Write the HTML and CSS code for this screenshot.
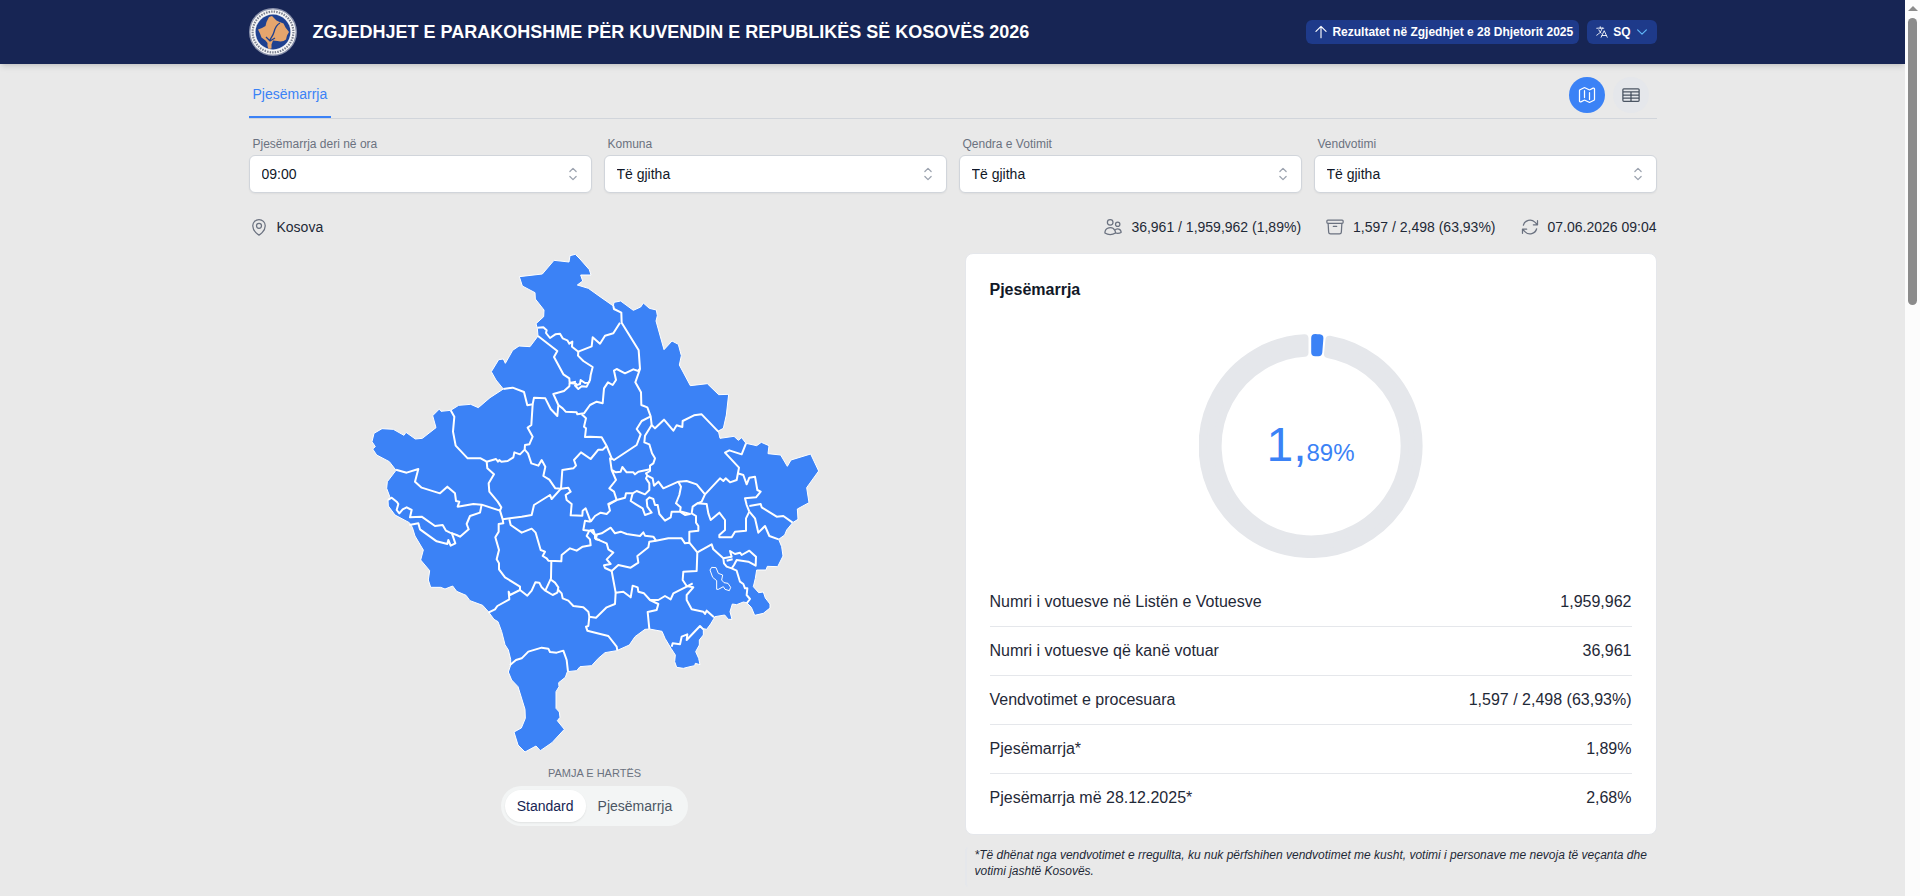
FILE: index.html
```html
<!DOCTYPE html>
<html lang="sq">
<head>
<meta charset="utf-8">
<meta name="viewport" content="width=device-width, initial-scale=1">
<title>Zgjedhjet e parakohshme për Kuvendin e Republikës së Kosovës 2026</title>
<link rel="stylesheet" href="styles.css">
</head>
<body>
<div class="page">
  <header class="topbar">
    <div class="container topbar-inner">
      <svg class="logo" viewBox="0 0 48 48" aria-hidden="true">
        <circle cx="24" cy="24" r="24" fill="#8d94ad"/>
        <circle cx="24" cy="24" r="22.6" fill="#f7f7f8"/>
        <circle cx="24" cy="24" r="20.4" fill="none" stroke="#7c8190" stroke-width="2.2" stroke-dasharray="1.5 1.1"/>
        <circle cx="24" cy="24" r="18" fill="#dfe3ee"/>
        <circle cx="24" cy="24" r="17.4" fill="#1e4090"/>
        <path fill="#e5a56d" d="M20 9l3-1 1.500 1.500 3 3 3 1.500 4 1.500 2 4 3.500 4.500-2 3.500-1 4-2.500 1.500-3 .5-3-.5-4.500-.5-1.500 4 0 4-3 .5-1-3 0-3-2-2.500-4-3-1.500-4-2-4 4-1.500 3.500-2 1-4z"/>
        <path fill="none" stroke="#1e4090" stroke-width="1.300" d="M31 15c-4 2-5 5-6 9s-3 5-4.500 9M17 29l4 4 5-3"/>
      </svg>
      <h1 class="title">ZGJEDHJET E PARAKOHSHME PËR KUVENDIN E REPUBLIKËS SË KOSOVËS 2026</h1>
      <div class="topbar-actions">
        <a class="chip" href="#">
          <svg class="icon chip-icon" viewBox="0 0 24 24" aria-hidden="true"><path d="M12 19.500v-15m0 0-6.750 6.750M12 4.500l6.750 6.750"/></svg>
          Rezultatet në Zgjedhjet e 28 Dhjetorit 2025
        </a>
        <button class="chip chip-lang" type="button">
          <svg class="icon lang-icon" viewBox="0 0 24 24" aria-hidden="true"><path d="m10.500 21 5.250-11.250L21 21m-9-3h7.500M3 5.621a48.474 48.474 0 0 1 6-.371m0 0c1.120 0 2.233.038 3.334.114M9 5.250V3m3.334 2.364C11.176 10.658 7.690 15.080 3 17.502m9.334-12.138c.896.061 1.785.147 2.666.257m-4.589 8.495a18.023 18.023 0 0 1-3.827-5.802"/></svg>
          SQ
          <svg class="icon lang-caret" viewBox="0 0 24 24" aria-hidden="true"><path d="m19.500 8.250-7.500 7.500-7.500-7.500"/></svg>
        </button>
      </div>
    </div>
  </header>

  <main class="container">
    <div class="tabs">
      <a class="tab" href="#">Pjesëmarrja</a>
      <div class="view-switch">
        <button class="round round-active" type="button" aria-label="Harta">
          <svg class="icon" viewBox="0 0 24 24" aria-hidden="true"><path d="M9 6.750V15m6-6v8.250m.503 3.498 4.875-2.437c.381-.19.622-.58.622-1.006V4.820c0-.836-.88-1.380-1.628-1.006l-3.869 1.934c-.317.159-.69.159-1.006 0L9.503 3.252a1.125 1.125 0 0 0-1.006 0L3.622 5.689C3.240 5.880 3 6.270 3 6.695V19.180c0 .836.88 1.380 1.628 1.006l3.869-1.934c.317-.159.69-.159 1.006 0l4.994 2.497c.317.158.69.158 1.006 0Z"/></svg>
        </button>
        <button class="round" type="button" aria-label="Tabela">
          <svg class="icon" viewBox="0 0 24 24" aria-hidden="true"><path d="M3.375 19.500h17.250m-17.250 0a1.125 1.125 0 0 1-1.125-1.125M3.375 19.500h7.500c.621 0 1.125-.504 1.125-1.125m-9.750 0V5.625m0 12.750v-1.500c0-.621.504-1.125 1.125-1.125m18.375 2.625V5.625m0 12.750c0 .621-.504 1.125-1.125 1.125m1.125-1.125v-1.500c0-.621-.504-1.125-1.125-1.125m0 3.750h-7.500A1.125 1.125 0 0 1 12 18.375m9.750-12.750c0-.621-.504-1.125-1.125-1.125H3.375c-.621 0-1.125.504-1.125 1.125m19.500 0v1.500c0 .621-.504 1.125-1.125 1.125M2.250 5.625v1.500c0 .621.504 1.125 1.125 1.125m0 0h17.250m-17.250 0h7.500c.621 0 1.125.504 1.125 1.125M3.375 8.250c-.621 0-1.125.504-1.125 1.125v1.500c0 .621.504 1.125 1.125 1.125m17.250-3.750h-7.500c-.621 0-1.125.504-1.125 1.125m8.625-1.125c.621 0 1.125.504 1.125 1.125v1.500c0 .621-.504 1.125-1.125 1.125m-17.250 0h7.500m-7.500 0c-.621 0-1.125.504-1.125 1.125v1.500c0 .621.504 1.125 1.125 1.125M12 10.875v-1.500m0 1.500c0 .621-.504 1.125-1.125 1.125M12 10.875c0 .621.504 1.125 1.125 1.125m-2.250 0c.621 0 1.125.504 1.125 1.125M13.125 12h7.500m-7.500 0c-.621 0-1.125.504-1.125 1.125M20.625 12c.621 0 1.125.504 1.125 1.125v1.500c0 .621-.504 1.125-1.125 1.125m-17.250 0h7.500M12 14.625v-1.500m0 1.500c0 .621-.504 1.125-1.125 1.125M12 14.625c0 .621.504 1.125 1.125 1.125m-2.250 0c.621 0 1.125.504 1.125 1.125m0 1.500v-1.500m0 0c0-.621.504-1.125 1.125-1.125m0 0h7.500"/></svg>
        </button>
      </div>
    </div>

    <form class="filters">
      <div class="field">
        <label for="ora">Pjesëmarrja deri në ora</label>
        <div class="select-wrap">
          <select id="ora"><option>09:00</option></select>
          <svg class="icon select-icon" viewBox="0 0 24 24" aria-hidden="true"><path d="M8.250 15 12 18.750 15.750 15m-7.500-6L12 5.250 15.750 9"/></svg>
        </div>
      </div>
      <div class="field">
        <label for="komuna">Komuna</label>
        <div class="select-wrap">
          <select id="komuna"><option>Të gjitha</option></select>
          <svg class="icon select-icon" viewBox="0 0 24 24" aria-hidden="true"><path d="M8.250 15 12 18.750 15.750 15m-7.500-6L12 5.250 15.750 9"/></svg>
        </div>
      </div>
      <div class="field">
        <label for="qendra">Qendra e Votimit</label>
        <div class="select-wrap">
          <select id="qendra"><option>Të gjitha</option></select>
          <svg class="icon select-icon" viewBox="0 0 24 24" aria-hidden="true"><path d="M8.250 15 12 18.750 15.750 15m-7.500-6L12 5.250 15.750 9"/></svg>
        </div>
      </div>
      <div class="field">
        <label for="vendvotimi">Vendvotimi</label>
        <div class="select-wrap">
          <select id="vendvotimi"><option>Të gjitha</option></select>
          <svg class="icon select-icon" viewBox="0 0 24 24" aria-hidden="true"><path d="M8.250 15 12 18.750 15.750 15m-7.500-6L12 5.250 15.750 9"/></svg>
        </div>
      </div>
    </form>

    <div class="summary">
      <div class="stat stat-place">
        <svg class="icon" viewBox="0 0 24 24" aria-hidden="true"><path d="M15 10.500a3 3 0 1 1-6 0 3 3 0 0 1 6 0Z"/><path d="M19.500 10.500c0 7.142-7.500 11.250-7.500 11.250S4.500 17.642 4.500 10.500a7.500 7.500 0 1 1 15 0Z"/></svg>
        <span>Kosova</span>
      </div>
      <div class="stat">
        <svg class="icon" viewBox="0 0 24 24" aria-hidden="true"><path d="M15 19.128a9.380 9.380 0 0 0 2.625.372 9.337 9.337 0 0 0 4.121-.952 4.125 4.125 0 0 0-7.533-2.493M15 19.128v-.003c0-1.113-.285-2.160-.786-3.070M15 19.128v.106A12.318 12.318 0 0 1 8.624 21c-2.331 0-4.512-.645-6.374-1.766l-.001-.109a6.375 6.375 0 0 1 11.964-3.070M12 6.375a3.375 3.375 0 1 1-6.750 0 3.375 3.375 0 0 1 6.750 0Zm8.250 2.250a2.625 2.625 0 1 1-5.250 0 2.625 2.625 0 0 1 5.250 0Z"/></svg>
        <span>36,961 / 1,959,962 (1,89%)</span>
      </div>
      <div class="stat">
        <svg class="icon" viewBox="0 0 24 24" aria-hidden="true"><path d="m20.250 7.500-.625 10.632a2.250 2.250 0 0 1-2.247 2.118H6.622a2.250 2.250 0 0 1-2.247-2.118L3.750 7.500M10 11.250h4M3.375 7.500h17.250c.621 0 1.125-.504 1.125-1.125v-1.500c0-.621-.504-1.125-1.125-1.125H3.375c-.621 0-1.125.504-1.125 1.125v1.500c0 .621.504 1.125 1.125 1.125Z"/></svg>
        <span>1,597 / 2,498 (63,93%)</span>
      </div>
      <div class="stat">
        <svg class="icon" viewBox="0 0 24 24" aria-hidden="true"><path d="M16.023 9.348h4.992v-.001M2.985 19.644v-4.992m0 0h4.992m-4.993 0 3.181 3.183a8.250 8.250 0 0 0 13.803-3.700M4.031 9.865a8.250 8.250 0 0 1 13.803-3.700l3.181 3.182m0-4.991v4.990"/></svg>
        <span>07.06.2026 09:04</span>
      </div>
    </div>

    <div class="columns">
      <section class="map-panel">
        <svg class="map" viewBox="30 24 1350 1512" role="img" aria-label="Harta e Kosovës">
          <path class="land" d="M630,32 646,28 660,42 688,74 693,90 662,90 668,108 652,120 685,130 720,155 760,183 762,172 782,168 820,196 842,186 850,174 868,190 889,195 892,212 888,228 912,314 936,288 955,298 964,332 958,360 991,422 1042,416 1076,449 1106,448 1099,510 1090,550 1075,558 1080,580 1122,574 1135,586 1145,578 1158,595 1190,602 1204,592 1227,602 1224,626 1262,630 1282,664 1293,645 1352,627 1376,678 1340,728 1347,773 1312,792 1314,823 1298,833 1280,855 1274,870 1256,883 1265,905 1269,933 1253,965 1222,964 1218,975 1190,975 1186,1000 1180,1025 1196,1043 1210,1041 1216,1059 1230,1077 1230,1089 1210,1105 1184,1111 1174,1087 1160,1073 1150,1071 1130,1079 1117,1077 1110,1100 1116,1123 1105,1123 1094,1110 1065,1115 1052,1137 1040,1153 1030,1151 1030,1170 1018,1185 1018,1200 1007,1220 1016,1240 1020,1259 1006,1255 1004,1262 990,1265 970,1270 950,1267 944,1250 946,1230 933,1210 915,1180 906,1159 868,1152 855,1153 825,1175 808,1200 770,1217 735,1223 715,1240 695,1262 660,1265 650,1277 622,1280 616,1297 596,1313 597,1325 588,1340 588,1390 598,1401 600,1417 592,1427 613,1453 576,1493 541,1517 528,1503 495,1521 474,1500 462,1461 484,1449 496,1420 495,1393 474,1325 455,1305 445,1281 452,1260 452,1243 445,1215 435,1199 425,1160 414,1130 402,1123 385,1100 368,1081 330,1067 318,1051 290,1039 278,1023 255,1032 242,1027 212,1027 205,1005 209,977 182,945 190,915 165,873 157,847 148,833 105,810 85,783 84,765 90,757 80,730 82,710 108,676 88,650 50,630 38,612 46,605 36,590 42,565 66,551 100,553 132,571 138,562 166,582 187,580 228,548 218,512 238,492 243,499 272,496 296,481 332,478 355,488 390,458 430,432 408,405 394,380 416,344 430,342 436,355 458,316 477,303 510,305 534,273 532,250 528,236 551,215 552,195 526,162 525,143 487,123 478,95 547,87 582,46 627,51Z"/>
          <g class="border">
            <path d="M532,248 550,247 560,256 558,264 570,279 586,268 600,266 608,280 622,286 628,296 637,290 636,305 655,320 695,304 698,277 720,296 735,272 760,265 780,233"/>
            <path d="M534,273 592,318 582,336 610,388 628,400 629,414 648,410M655,320 654,332 670,348 698,366 692,390 690,405 680,425 665,424 655,432 645,422 660,417 662,405 675,414 690,410M629,414 648,416 650,428"/>
            <path d="M629,414 628,424 612,438 580,447 595,480 592,513 572,492 556,460 522,458 518,478 502,481 492,441 458,428 430,432M595,480 608,490 617,500 650,502 652,508 672,505 690,480 710,470 728,475 732,430 744,412 758,420 768,405 762,377 770,372 795,385 820,373 835,378 838,372"/>
            <path d="M518,478 514,540 503,548 518,575 508,598 495,600 494,614 480,628 463,622 460,637 443,648 424,650 418,645 414,650 408,642 380,650 362,640 323,640 287,602 279,560 283,515 272,496"/>
            <path d="M665,508 678,520 672,545 678,550 675,576 690,575 725,577 740,603 755,640 762,645 830,600 842,568 830,552 845,528 872,514"/>
            <path d="M494,614 504,625 514,655 535,662 545,645 556,665 550,693 568,704 586,730 603,731 607,675 640,670 648,662 642,645 663,622 692,642 715,614 728,614 740,603"/>
            <path d="M108,674 140,683 175,672 165,710 185,728 240,745 262,725 285,745 288,768 298,770 293,785 340,777 365,779 420,797 424,787 413,770 388,740 386,715 402,688 382,670 380,650"/>
            <path d="M603,731 575,762 570,750 522,780 515,810 485,815 428,823M603,731 625,728 632,740 617,750 620,765 635,777 632,811 667,812 668,797 677,790 692,830"/>
            <path d="M84,765 95,758 110,770 115,777 110,795 118,805 128,793 140,787 155,795 150,817 185,815 225,843 248,840 258,857 270,863 290,870 300,875 326,853 320,837 330,813 360,803 365,779"/>
            <path d="M148,840 175,835 180,853 230,889 262,897 265,885 272,902 286,895 275,863"/>
          </g>
          <g class="border" transform="translate(690 0)">
            <path d="M70,183 72,192 94,203 95,233 146,316 150,372 136,412 153,442 154,480 172,487 182,514 185,540 195,550 222,524 250,557 260,541 277,546 278,528 312,511 335,508 385,560"/>
            <path d="M185,540 165,572 163,592 178,598 186,625 195,640 190,655 180,662 180,678 168,685 172,692 168,700 178,715 178,735 165,748 140,738 128,745 108,745 105,758 80,765 55,780"/>
            <path d="M66,643 60,640 65,675 78,682 92,680 97,666 110,682 130,682 135,688 145,680 180,673M65,675 78,705 58,730 72,740 80,765M128,745 122,768 138,778 158,790 165,810 185,803 172,785 170,765 178,757 190,762 195,780 203,780 208,807 225,827 242,817 245,800 275,800 300,807 285,810 270,800 272,787 258,775 268,750 273,725 265,710"/>
            <path d="M172,692 188,700 192,722 205,710 220,730 265,710 290,708 320,718 345,748 390,700 400,708 407,700 420,712 440,705 447,668 405,623 418,616 455,628 468,595M345,748 335,770 322,775"/>
            <path d="M443,685 460,690 470,718 478,698 495,695 502,735 512,740 498,757 465,760 470,780 478,800"/>
          </g>
          <g class="border" transform="translate(0 765)">
            <path d="M420,32 428,58 430,70 416,72 416,95 406,112 417,150 410,178 417,190 417,208 435,232 480,260 480,270 450,285 446,275 448,298 412,318 405,328 385,338"/>
            <path d="M448,58 452,75 485,98 515,86 527,98 542,150 555,155 548,168 560,175 565,182 604,184 605,165 630,145 650,152 668,140 692,136 690,118 680,108 688,92 700,90 705,105"/>
            <path d="M574,182 573,235 556,272 545,262 538,248 526,247 515,272 502,287 480,270M570,237 585,248 595,262 592,278 578,285 556,272M595,270 605,280 608,295 625,302 640,318 670,322 685,335 688,350 708,353 740,322 765,312 767,278"/>
            <path d="M688,350 685,378 678,380 682,392 745,408 770,440 772,452M692,65 675,62 670,90 688,92M692,65 705,48 722,38 740,42 750,32 745,12 770,0"/>
            <path d="M720,120 708,118 710,105 705,105"/>
            <path d="M450,495 468,480 485,475 505,455 545,443 565,446 570,456 590,458 610,452 620,480 624,515"/>
          </g>
          <g class="border" transform="translate(690 765)">
            <path d="M0,90 15,105 35,100 62,83 75,100 92,95 110,102 150,108 160,97 165,107 190,110 198,122 235,115 275,115 285,130 298,128 322,157"/>
            <path d="M15,105 15,115 50,130 55,148 70,158 50,178 62,192 42,196 45,204 65,213 85,195 122,203 145,188 142,168 175,142 178,125 198,122"/>
            <path d="M65,213 70,240 77,278 100,275 122,292 128,257 143,262 145,275 162,280 180,300 205,300 225,288 242,298 250,280 290,260 308,250M180,300 205,312 200,330 173,336 178,387"/>
            <path d="M322,157 320,213 280,215 278,240 290,258 310,262 290,285 290,300 305,328 340,335 345,342 350,332 372,352"/>
            <path d="M322,157 365,133 370,148 400,175 402,190 410,200 425,205 440,212 450,245 460,252 465,265 472,265 470,285 480,297 470,310M400,175 425,170 420,153 435,162 450,158 455,165 478,152 498,170 497,197 475,185 440,180 432,195 425,205M410,182 428,178"/>
            <path d="M298,128 298,95 325,92 325,78 318,68 318,48 305,40 308,20 322,10 350,12 355,40 362,60 388,38 405,60 405,90 388,105 388,112 425,112 435,95 468,92 468,55 478,35"/>
            <path d="M478,18 512,12 515,22 560,50 580,48 608,68M478,35 495,55 505,98 525,78 538,108 566,118"/>
            <path d="M245,440 248,430 270,433 275,410 292,403 290,420 330,378 340,388"/>
            <path class="enclave" d="M365,202 378,203 385,220 398,225 395,240 402,248 414,250 422,262 418,272 405,268 400,260 385,268 380,268 380,242 368,232 360,210Z"/>
          </g>
        </svg>
        <p class="map-label">PAMJA E HARTËS</p>
        <div class="segmented">
          <button class="segment segment-active" type="button">Standard</button>
          <button class="segment" type="button">Pjesëmarrja</button>
        </div>
      </section>

      <section class="results">
        <div class="card">
          <h2 class="card-title">Pjesëmarrja</h2>
          <div class="donut">
            <svg class="donut-ring" viewBox="0 0 224 224" aria-hidden="true">
              <path class="arc arc-rest" d="M130.500 5.700A108 108 0 1 1 105.500 4.200L105.500 18.700A93.500 93.500 0 1 0 129 20Z"/>
              <path class="arc arc-vote" d="M116.200 4A108 108 0 0 1 120.400 4.300L119.300 18.300A93.500 93.500 0 0 0 116.200 18.200Z"/>
            </svg>
            <p class="donut-value"><span class="donut-int">1,</span><span class="donut-dec">89%</span></p>
          </div>
          <dl class="rows">
            <div class="row"><dt>Numri i votuesve në Listën e Votuesve</dt><dd>1,959,962</dd></div>
            <div class="row"><dt>Numri i votuesve që kanë votuar</dt><dd>36,961</dd></div>
            <div class="row"><dt>Vendvotimet e procesuara</dt><dd>1,597 / 2,498 (63,93%)</dd></div>
            <div class="row"><dt>Pjesëmarrja*</dt><dd>1,89%</dd></div>
            <div class="row"><dt>Pjesëmarrja më 28.12.2025*</dt><dd>2,68%</dd></div>
          </dl>
        </div>
        <p class="note">*Të dhënat nga vendvotimet e rregullta, ku nuk përfshihen vendvotimet me kusht, votimi i personave me nevoja të veçanta dhe votimi jashtë Kosovës.</p>
      </section>
    </div>
  </main>
</div>
<div class="scrollbar" aria-hidden="true">
  <span class="scroll-arrow"></span>
  <span class="scroll-thumb"></span>
</div>
</body>
</html>
```
FILE: styles.css
```css
* {
  box-sizing: border-box;
}

body {
  margin: 0;
  min-height: 100vh;
  display: grid;
  grid-template-columns: minmax(0, 1fr) 15px;
  background: #e9e9e9;
  color: #1f2937;
  font-family: "Liberation Sans", Arial, sans-serif;
  font-size: 14px;
  line-height: 20px;
}

h1, h2, p, dl, dd {
  margin: 0;
}

button, select {
  font: inherit;
  color: inherit;
  border: 0;
  margin: 0;
}

a {
  color: inherit;
  text-decoration: none;
}

.icon {
  display: block;
  flex: none;
  width: 20px;
  height: 20px;
  fill: none;
  stroke: currentColor;
  stroke-width: 1.5;
  stroke-linecap: round;
  stroke-linejoin: round;
}

.container {
  width: 100%;
  max-width: 1440px;
  margin: 0 auto;
  padding: 0 16px;
}

/* Header */
.topbar {
  background: #172554;
  color: #fff;
  box-shadow: 0 4px 6px -1px rgba(0, 0, 0, 0.1), 0 2px 4px -2px rgba(0, 0, 0, 0.1);
}

.topbar-inner {
  display: flex;
  align-items: center;
  min-height: 64px;
}

.logo {
  flex: none;
  width: 48px;
  height: 48px;
}

.title {
  margin-left: 16px;
  font-size: 18px;
  line-height: 28px;
  font-weight: 700;
}

.topbar-actions {
  display: flex;
  gap: 8px;
  margin-left: auto;
}

.chip {
  display: flex;
  align-items: center;
  gap: 2px;
  height: 24px;
  padding: 0 6px;
  border-radius: 6px;
  background: #1e3a8a;
  font-size: 12px;
  line-height: 16px;
  font-weight: 700;
  white-space: nowrap;
}

.chip-icon {
  width: 18px;
  height: 18px;
}

.chip-lang {
  gap: 4px;
  padding: 0 8px;
}

.lang-icon {
  width: 14px;
  height: 14px;
}

.lang-caret {
  width: 14px;
  height: 14px;
  color: #60b8fa;
  stroke-width: 2;
}

/* Tabs */
.tabs {
  display: flex;
  align-items: flex-end;
  justify-content: space-between;
  padding-top: 13px;
  border-bottom: 1px solid #d1d5db;
}

.tab {
  padding: 0 4px 12px;
  border-bottom: 2px solid #3b82f6;
  color: #3b82f6;
}

.view-switch {
  display: flex;
  gap: 8px;
  padding: 0 8px 5px 0;
}

.round {
  display: grid;
  place-items: center;
  width: 36px;
  height: 36px;
  padding: 0;
  border-radius: 50%;
  background: #e5e7eb;
  color: #4b5563;
}

.round-active {
  background: #3b82f6;
  color: #fff;
}

/* Filters */
.filters {
  display: grid;
  grid-template-columns: repeat(4, minmax(0, 1fr));
  gap: 12px;
  padding-top: 17px;
}

.field {
  display: grid;
  gap: 3px;
}

.field label {
  padding-left: 4px;
  font-size: 12px;
  line-height: 16px;
  color: #6b7280;
}

.select-wrap {
  display: grid;
  align-items: center;
}

.select-wrap > * {
  grid-area: 1 / 1;
}

.select-wrap select {
  width: 100%;
  height: 38px;
  padding: 0 40px 0 12px;
  border: 1px solid #d1d5db;
  border-radius: 6px;
  background: #fff;
  color: #111827;
  appearance: none;
  box-shadow: 0 1px 2px rgba(0, 0, 0, 0.05);
}

.select-icon {
  justify-self: end;
  margin-right: 9px;
  color: #9ca3af;
  pointer-events: none;
}

/* Summary line */
.summary {
  display: flex;
  gap: 24px;
  padding: 24px 0 16px;
  color: #1f2937;
}

.stat {
  display: flex;
  align-items: center;
  gap: 8px;
}

.stat .icon {
  color: #6b7280;
}

.stat-place {
  margin-right: auto;
}

/* Map and results */
.columns {
  display: grid;
  grid-template-columns: repeat(2, minmax(0, 1fr));
  gap: 24px;
}

.map-panel {
  display: flex;
  flex-direction: column;
  align-items: center;
}

.map {
  width: 450px;
  max-width: 100%;
}

.land {
  fill: #3b82f6;
  stroke: #fff;
  stroke-width: 3;
}

.border {
  fill: none;
  stroke: #fff;
  stroke-width: 6;
  stroke-linejoin: round;
}

.enclave {
  stroke-width: 3;
}

.map-label {
  margin-top: 8px;
  font-size: 11px;
  line-height: 16px;
  color: #6b7280;
}

.segmented {
  display: flex;
  margin-top: 5px;
  padding: 4px;
  border-radius: 20px;
  background: #f3f5f5;
}

.segment {
  padding: 6px 12px;
  border-radius: 16px;
  background: transparent;
  color: #4b5563;
}

.segment-active {
  background: #fff;
  color: #172554;
  box-shadow: 0 1px 2px rgba(0, 0, 0, 0.08);
}

.card {
  padding: 24px 24px 12px;
  border: 1px solid #e5e7eb;
  border-radius: 8px;
  background: #fff;
}

.card-title {
  font-size: 16px;
  line-height: 24px;
  font-weight: 700;
  color: #111827;
}

.donut {
  display: grid;
  place-items: center;
  padding: 32px 0 20px;
}

.donut > * {
  grid-area: 1 / 1;
}

.donut-ring {
  width: 224px;
  height: 224px;
}

.arc {
  stroke-width: 8;
  stroke-linejoin: round;
}

.arc-rest {
  fill: #e5e7eb;
  stroke: #e5e7eb;
}

.arc-vote {
  fill: #3b82f6;
  stroke: #3b82f6;
}

.donut-value {
  padding-top: 8px;
  color: #3b82f6;
  line-height: 48px;
}

.donut-int {
  font-size: 48px;
}

.donut-dec {
  font-size: 24px;
}

.row {
  display: flex;
  justify-content: space-between;
  gap: 16px;
  padding: 12px 0;
  font-size: 16px;
  line-height: 24px;
}

.row + .row {
  border-top: 1px solid #e5e7eb;
}

.note {
  margin-top: 12px;
  padding: 0 8px 8px;
  border-left: 2px solid #e5e7eb;
  border-radius: 4px;
  font-size: 12px;
  line-height: 16px;
  font-style: italic;
}

/* Scroll track */
.scrollbar {
  display: flex;
  flex-direction: column;
  align-items: center;
  gap: 7px;
  padding-top: 6px;
  background: #fcfcfc;
}

.scroll-arrow {
  border: 5px solid transparent;
  border-top-width: 0;
  border-bottom-color: #8b8b8b;
}

.scroll-thumb {
  width: 9px;
  height: 32vh;
  border-radius: 5px;
  background: #8b8b8b;
}
```
